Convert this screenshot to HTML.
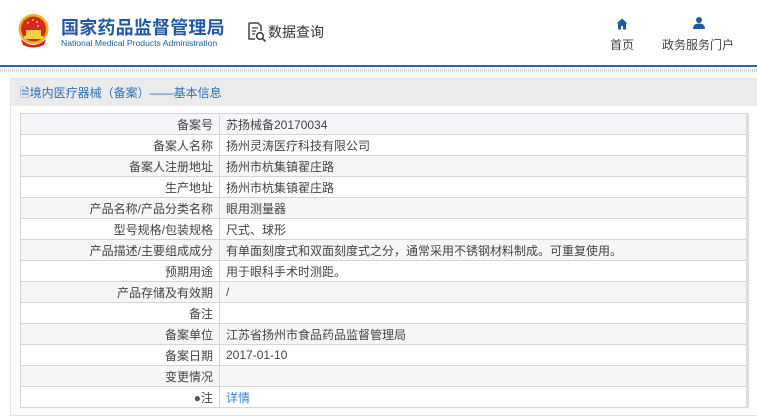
<!DOCTYPE html>
<html><head><meta charset="utf-8">
<style>
*{margin:0;padding:0;box-sizing:border-box}
body{width:757px;height:419px;overflow:hidden;background:#fff;font-family:"Liberation Sans","Noto Sans CJK SC",sans-serif;font-size:12px;color:#333;position:relative}
.hdr{position:absolute;left:0;top:0;width:757px;height:67px;border-bottom:2px solid #2a66a8}
.dots{position:absolute;left:0;top:69px;width:757px;height:3px;background:repeating-linear-gradient(90deg,#ccc 0 1px,#fff 1px 2px)}
.t1{position:absolute;left:61px;top:14px;font-size:18px;font-weight:bold;color:#1f5aa6;letter-spacing:0.2px}
.t2{position:absolute;left:61px;top:38px;font-size:8.6px;color:#1f5aa6}
.sj{position:absolute;left:268px;top:22px;font-size:14px;color:#333}
.nav{position:absolute;top:36px;font-size:12px;color:#444}
.panel{position:absolute;left:10px;top:78px;width:760px;height:338px;background:#fff;border:1px solid #e2e2e2}
.ph{height:27px;background:#ebebeb;color:#2f6db5;font-size:12px;padding:5px 0 0 9px}
table{position:absolute;left:9px;top:34px;width:729px;border-collapse:collapse;border-right:3px solid #ddd}
td{height:21px;border:1px solid #d4d4d4;padding:0 6px;font-size:12px;color:#444;white-space:nowrap}
td.l{width:199px;text-align:right}
tr:nth-child(odd) td{background:#f6f6f6}
tr:first-child td{background:#f4f6fa}
a{color:#3a7fd5;text-decoration:none}
</style></head><body>
<div class="hdr">
<svg style="position:absolute;left:17px;top:13px" width="33" height="36" viewBox="0 0 33 36">
<circle cx="16.5" cy="16" r="15" fill="#e7b420"/>
<circle cx="16.5" cy="16" r="12.5" fill="#d8261c"/>
<polygon points="11,8 12,11 9,9.5 13,9.5 10,11" fill="#f4d03f"/>
<circle cx="16" cy="7" r="1" fill="#f4d03f"/><circle cx="20" cy="9" r="1" fill="#f4d03f"/><circle cx="21" cy="13" r="1" fill="#f4d03f"/>
<rect x="9" y="17" width="15" height="6" fill="#f4d03f"/>
<rect x="7" y="23" width="19" height="3" fill="#f4d03f"/>
<path d="M4 26 Q16 38 29 26 L27 32 Q16 37 6 32Z" fill="#d8261c"/>
</svg>
<div class="t1">国家药品监督管理局</div>
<div class="t2">National Medical Products Administration</div>
<svg style="position:absolute;left:247px;top:22px" width="20" height="20" viewBox="0 0 20 20"><path d="M2 1h9l3 3v5M2 1v16h6" fill="none" stroke="#444" stroke-width="1.5"/><path d="M5 6h6M5 9h4M5 12h3" stroke="#444" stroke-width="1.2"/><circle cx="13" cy="14" r="3.3" fill="none" stroke="#444" stroke-width="1.6"/><path d="M15.5 16.5l3 3" stroke="#444" stroke-width="1.8"/></svg>
<div class="sj">数据查询</div>
<svg style="position:absolute;left:616px;top:18px" width="12" height="12" viewBox="0 0 12 12"><path d="M6 0.5L0.5 5.5H2V11.5H5V8H7V11.5H10V5.5H11.5Z" fill="#1f5aa6"/></svg>
<div class="nav" style="left:610px">首页</div>
<svg style="position:absolute;left:693px;top:16px" width="12" height="14" viewBox="0 0 12 14"><circle cx="6" cy="4" r="3" fill="#1f5aa6"/><path d="M0 13 Q0 7.5 6 7.5 Q12 7.5 12 13Z" fill="#1f5aa6"/></svg>
<div class="nav" style="left:662px">政务服务门户</div>
</div>
<div class="dots"></div>
<div class="panel">
<div class="ph">🗎境内医疗器械（备案）——基本信息</div>
<table>
<tr><td class="l">备案号</td><td>苏扬械备20170034</td></tr>
<tr><td class="l">备案人名称</td><td>扬州灵涛医疗科技有限公司</td></tr>
<tr><td class="l">备案人注册地址</td><td>扬州市杭集镇翟庄路</td></tr>
<tr><td class="l">生产地址</td><td>扬州市杭集镇翟庄路</td></tr>
<tr><td class="l">产品名称/产品分类名称</td><td>眼用测量器</td></tr>
<tr><td class="l">型号规格/包装规格</td><td>尺式、球形</td></tr>
<tr><td class="l">产品描述/主要组成成分</td><td>有单面刻度式和双面刻度式之分，通常采用不锈钢材料制成。可重复使用。</td></tr>
<tr><td class="l">预期用途</td><td>用于眼科手术时测距。</td></tr>
<tr><td class="l">产品存储及有效期</td><td>/</td></tr>
<tr><td class="l">备注</td><td></td></tr>
<tr><td class="l">备案单位</td><td>江苏省扬州市食品药品监督管理局</td></tr>
<tr><td class="l">备案日期</td><td>2017-01-10</td></tr>
<tr><td class="l">变更情况</td><td></td></tr>
<tr><td class="l"><span style="color:#555">●</span>注</td><td><a>详情</a></td></tr>
</table>
</div>
</body></html>
